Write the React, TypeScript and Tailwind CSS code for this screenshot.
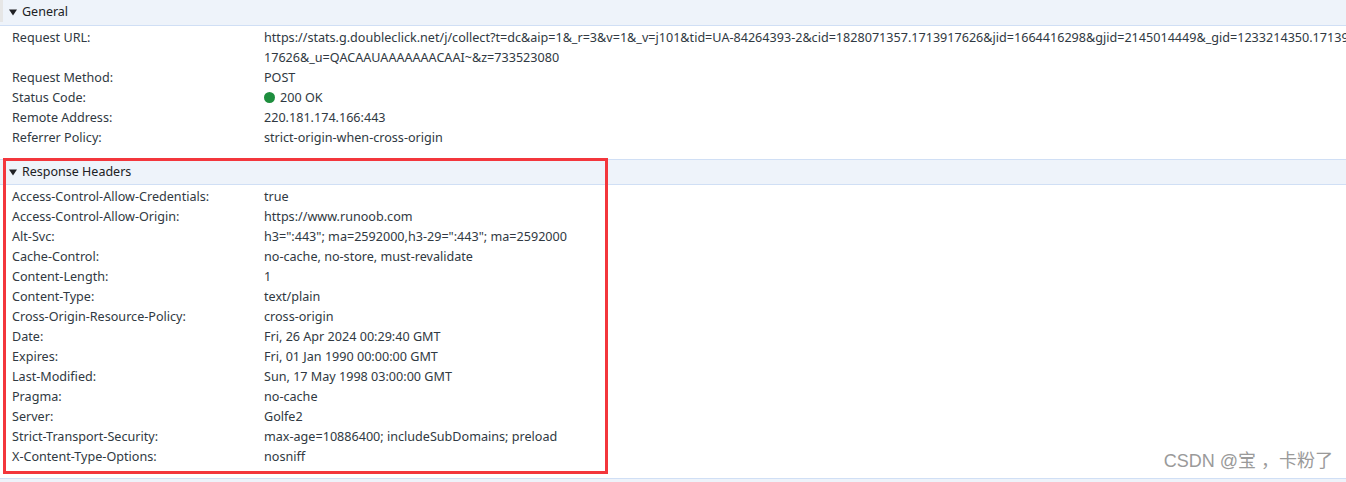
import React from "react";

const FONT = "font-['Noto_Sans','Noto_Sans_CJK_SC',sans-serif]";
const ROW = "grid h-5 grid-cols-[264px_1fr] items-center whitespace-nowrap";

const GENERAL: [string, React.ReactNode][] = [
  ["Request Method:", "POST"],
  [
    "Status Code:",
    <span className="flex items-center gap-[5px]">
      <span className="inline-block h-[11px] w-[11px] rounded-full bg-[#1e8e3e]" />
      200 OK
    </span>,
  ],
  ["Remote Address:", "220.181.174.166:443"],
  ["Referrer Policy:", "strict-origin-when-cross-origin"],
];

const RESPONSE: [string, string][] = [
  ["Access-Control-Allow-Credentials:", "true"],
  ["Access-Control-Allow-Origin:", "https://www.runoob.com"],
  ["Alt-Svc:", 'h3=":443"; ma=2592000,h3-29=":443"; ma=2592000'],
  ["Cache-Control:", "no-cache, no-store, must-revalidate"],
  ["Content-Length:", "1"],
  ["Content-Type:", "text/plain"],
  ["Cross-Origin-Resource-Policy:", "cross-origin"],
  ["Date:", "Fri, 26 Apr 2024 00:29:40 GMT"],
  ["Expires:", "Fri, 01 Jan 1990 00:00:00 GMT"],
  ["Last-Modified:", "Sun, 17 May 1998 03:00:00 GMT"],
  ["Pragma:", "no-cache"],
  ["Server:", "Golfe2"],
  ["Strict-Transport-Security:", "max-age=10886400; includeSubDomains; preload"],
  ["X-Content-Type-Options:", "nosniff"],
];

function Arrow() {
  return (
    <svg width="8" height="7" viewBox="0 0 8 7" className="mr-[5px] shrink-0">
      <path d="M0 0.5h8L4 6.5z" fill="#202124" />
    </svg>
  );
}

function Header({ title, top = true }: { title: string; top?: boolean }) {
  return (
    <div
      className={`flex h-[26px] items-center border-b border-[#d0dff5] bg-[#eef3fa] pl-[9px] text-[12.5px] text-[#202124] ${
        top ? "border-t" : "h-[25px]"
      }`}
    >
      <Arrow />
      {title}
    </div>
  );
}

function Row({ k, v }: { k: string; v: React.ReactNode }) {
  return (
    <div className={ROW}>
      <div className="pl-3">{k}</div>
      <div>{v}</div>
    </div>
  );
}

export default function App() {
  return (
    <div className={`relative h-[482px] w-[1346px] overflow-hidden bg-white text-[12.6px] text-[#303942] ${FONT}`}>
      <div className="absolute left-0 top-0 h-[22px] w-[3px] bg-[#e6e6e6]" />
      <Header title="General" top={false} />
      <div className="pb-[11px] pt-[2px]">
        <div className="grid grid-cols-[264px_1fr]">
          <div className="pl-3 leading-5">Request URL:</div>
          <div className="min-w-0 overflow-hidden leading-5">
            <div className="whitespace-nowrap">
              https://stats.g.doubleclick.net/j/collect?t=dc&amp;aip=1&amp;_r=3&amp;v=1&amp;_v=j101&amp;tid=UA-84264393-2&amp;cid=1828071357.1713917626&amp;jid=1664416298&amp;gjid=2145014449&amp;_gid=1233214350.17139
            </div>
            <div className="whitespace-nowrap">17626&amp;_u=QACAAUAAAAAAACAAI~&amp;z=733523080</div>
          </div>
        </div>
        {GENERAL.map(([k, v]) => (
          <Row key={k} k={k} v={v} />
        ))}
      </div>
      <Header title="Response Headers" />
      <div className="pb-[11px] pt-[2px]">
        {RESPONSE.map(([k, v]) => (
          <Row key={k} k={k} v={v} />
        ))}
      </div>
      <div className="h-[10px] border-t border-[#d0dff5] bg-[#eef3fa]" />

      <div className="pointer-events-none absolute left-[3px] top-[158px] h-[316px] w-[605px] border-[3px] border-[#f3363c]" />
      <div className="absolute bottom-[7px] right-[13px] text-[18px] text-[#9a9a9a] font-['Liberation_Sans','Noto_Sans_CJK_SC',sans-serif]">
        CSDN @宝 ，卡粉了
      </div>
    </div>
  );
}
